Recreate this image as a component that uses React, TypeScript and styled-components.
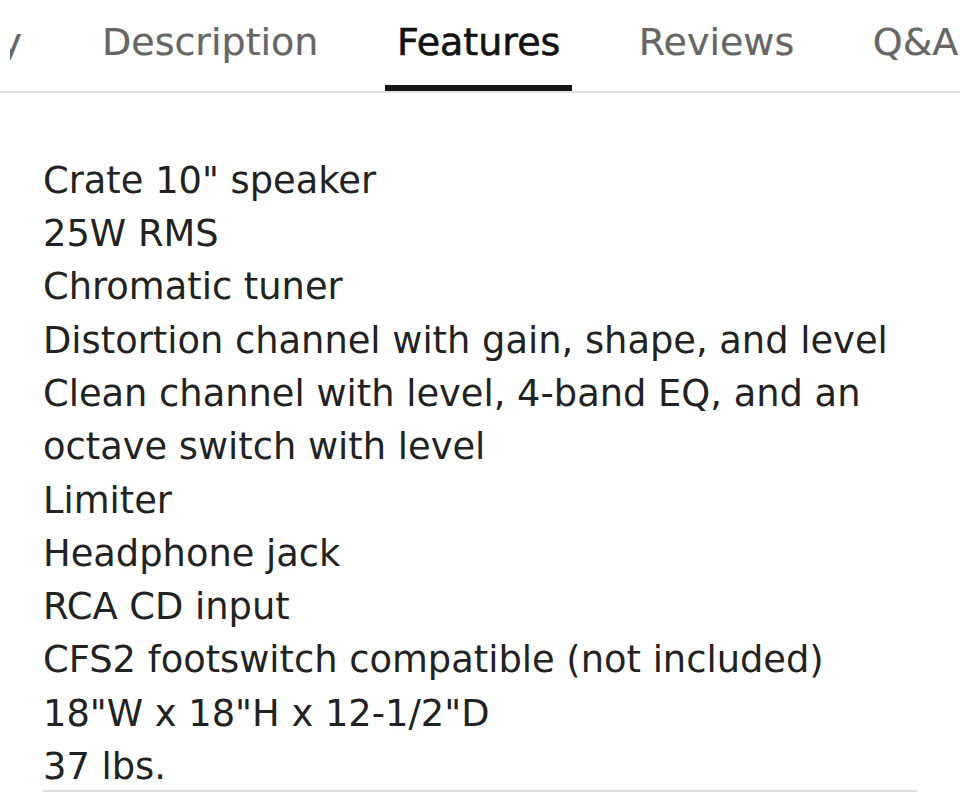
import React from "react";
import styled, { createGlobalStyle } from "styled-components";

const GlobalStyle = createGlobalStyle`
  html, body { margin: 0; padding: 0; background: #ffffff; }
  body { font-family: "DejaVu Sans", "Noto Sans", sans-serif; color: #1b1b1b; }
`;

const Page = styled.div`
  width: 960px;
  height: 796px;
  overflow: hidden;
  background: #ffffff;
`;

const TabBar = styled.nav`
  display: flex;
  align-items: flex-end;
  gap: 54.5px;
  border-bottom: 2px solid #e3e3e3;
  overflow: hidden;
  white-space: nowrap;
`;

const ClippedTab = styled.div`
  width: 24px;
  margin-left: 10px;
  margin-right: 1.5px;
  overflow: hidden;
  display: flex;
  justify-content: flex-end;
  flex-shrink: 0;
`;

const Tab = styled.div<{ $active?: boolean }>`
  flex-shrink: 0;
  padding: 20px 12px 21px;
  font-size: 38px;
  line-height: 44px;
  font-weight: 400;
  color: ${(p) => (p.$active ? "#121212" : "#666666")};
  border-bottom: 6px solid ${(p) => (p.$active ? "#141414" : "transparent")};
  -webkit-text-stroke: ${(p) => (p.$active ? "0.6px #121212" : "0.2px #666666")};
`;

const HiddenTab = styled(Tab)`
  padding-left: 0;
`;

const Content = styled.section`
  padding: 60.8px 43px 0;
`;

const FeatureList = styled.ul`
  list-style: none;
  margin: 0;
  padding: 0;
`;

const Feature = styled.li`
  font-size: 36.8px;
  line-height: 53.3px;
  color: #222222;
`;

const Divider = styled.hr`
  margin: -3.4px 0 0;
  border: 0;
  height: 2px;
  background: #dedede;
`;

const features = [
  'Crate 10" speaker',
  "25W RMS",
  "Chromatic tuner",
  "Distortion channel with gain, shape, and level",
  "Clean channel with level, 4-band EQ, and an octave switch with level",
  "Limiter",
  "Headphone jack",
  "RCA CD input",
  "CFS2 footswitch compatible (not included)",
  '18"W x 18"H x 12-1/2"D',
  "37 lbs.",
];

export default function App() {
  return (
    <Page>
      <GlobalStyle />
      <TabBar>
        <ClippedTab>
          <HiddenTab>Summary</HiddenTab>
        </ClippedTab>
        <Tab>Description</Tab>
        <Tab $active>Features</Tab>
        <Tab>Reviews</Tab>
        <Tab>Q&amp;A</Tab>
      </TabBar>
      <Content>
        <FeatureList>
          {features.map((f) => (
            <Feature key={f}>{f}</Feature>
          ))}
        </FeatureList>
        <Divider />
      </Content>
    </Page>
  );
}
